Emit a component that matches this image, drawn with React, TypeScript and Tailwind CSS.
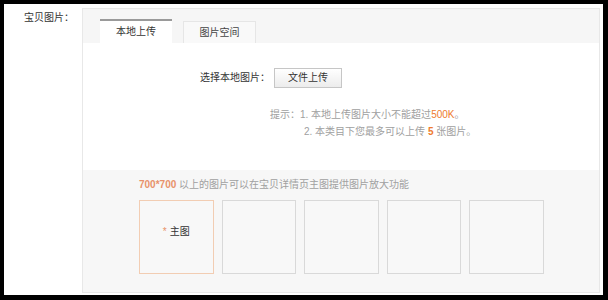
import React from 'react';

const slots = [0, 1, 2, 3, 4];

export default function App() {
  return (
    <div className="w-[608px] h-[300px] bg-black pt-1 pl-1 pr-[5px] pb-[5px] font-['Liberation_Sans','Noto_Sans_CJK_SC',sans-serif] text-[10px] leading-[14px]">
      <div className="h-full bg-white flex pt-1 pr-[3px] pb-[2px]">
        {/* Left label */}
        <div className="w-[78px] pl-5 pt-[3px] text-[#333]">宝贝图片：</div>

        {/* Panel */}
        <div className="flex-1 border border-[#e8e8e8] flex flex-col">
          {/* Tabs */}
          <div className="h-[34px] shrink-0 bg-[#f6f6f6] flex items-end gap-[11px] pl-[17px]">
            <div className="w-[72px] h-[24px] bg-white border-t-2 border-[#9a9a9a] flex items-center justify-center text-[#333]">
              本地上传
            </div>
            <div className="w-[73px] h-[22px] bg-[#f9f9f9] border border-b-0 border-[#e6e6e6] flex items-center justify-center text-[#444]">
              图片空间
            </div>
          </div>

          {/* Local upload */}
          <div className="h-[127px] shrink-0 bg-white">
            <div className="pt-[25px] pl-[117px] flex items-center">
              <span className="text-[#333]">选择本地图片：</span>
              <button className="ml-[4px] w-[68px] h-[20px] border border-[#c6c6c6] bg-gradient-to-b from-white to-[#ececec] text-[#333] text-[10px] leading-[14px]">
                文件上传
              </button>
            </div>
            <div className="mt-[20px] pl-[187px] text-[#a0a0a0]">
              提示：1. 本地上传图片大小不能超过<span className="text-[#ee7a2e]">500K</span>。
            </div>
            <div className="mt-[3px] pl-[221px] text-[#a0a0a0]">
              2. 本类目下您最多可以上传 <span className="text-[#ee7a2e] font-bold">5</span> 张图片。
            </div>
          </div>

          {/* Main images */}
          <div className="flex-1 bg-[#f7f7f7] pl-[56px] pt-[8px]">
            <div className="text-[#a0a0a0]">
              <span className="font-bold text-[#e8926a]">700*700</span> 以上的图片可以在宝贝详情页主图提供图片放大功能
            </div>
            <div className="mt-[8px] flex gap-[8px]">
              {slots.map((i) => (
                <div
                  key={i}
                  className={
                    i === 0
                      ? 'w-[74.5px] h-[74px] border border-[#f2cdb3] bg-[#f8f8f8] flex items-center justify-center pb-[10px]'
                      : 'w-[74.5px] h-[74px] border border-[#d9d9d9] bg-[#f8f8f8]'
                  }
                >
                  {i === 0 && (
                    <span className="text-[#333]">
                      <span className="text-[#e8926a] mr-[3px]">*</span>主图
                    </span>
                  )}
                </div>
              ))}
            </div>
          </div>
        </div>
      </div>
    </div>
  );
}
